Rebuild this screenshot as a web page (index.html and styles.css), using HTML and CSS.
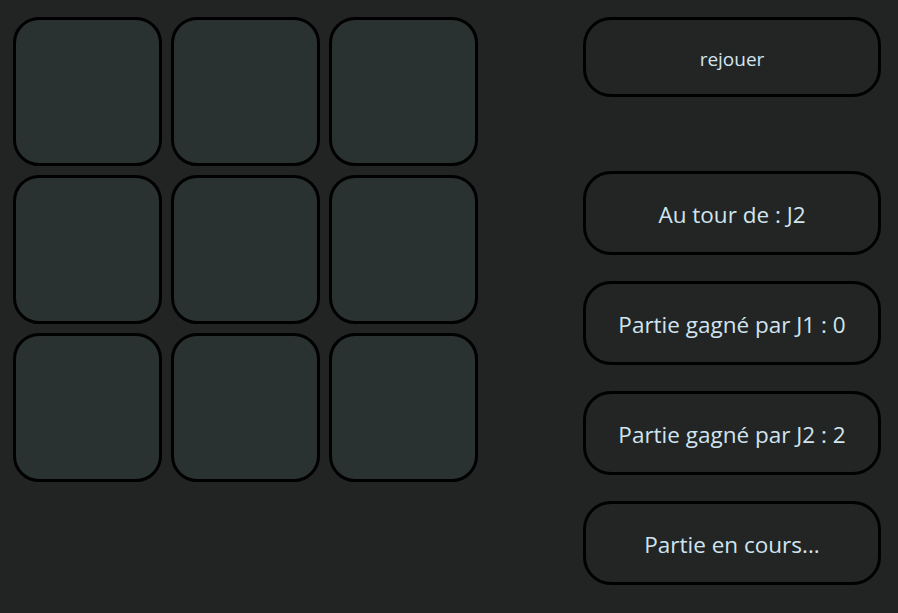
FILE: index.html
```html
<!DOCTYPE html>
<html lang="fr">
<head>
<meta charset="utf-8">
<title>Morpion</title>
<link rel="stylesheet" href="styles.css">
</head>
<body>
<main class="app">
  <section class="board">
    <div class="cell"></div>
    <div class="cell"></div>
    <div class="cell"></div>
    <div class="cell"></div>
    <div class="cell"></div>
    <div class="cell"></div>
    <div class="cell"></div>
    <div class="cell"></div>
    <div class="cell"></div>
  </section>
  <aside class="panel">
    <button class="btn btn-replay">rejouer</button>
    <div class="info info-turn">Au tour de : J2</div>
    <div class="info">Partie gagné par J1 : 0</div>
    <div class="info">Partie gagné par J2 : 2</div>
    <div class="info">Partie en cours...</div>
  </aside>
</main>
</body>
</html>
```

FILE: styles.css
```css
html, body {
  margin: 0;
  padding: 0;
  background: #222323;
  height: 100%;
}

body {
  font-family: "Open Sans", "Noto Sans", sans-serif;
  color: #d0e4f0;
}

.app {
  display: flex;
  justify-content: space-between;
  align-items: flex-start;
  padding: 17px 17px 0 13px;
}

.board {
  display: grid;
  grid-template-columns: repeat(3, 149px);
  grid-auto-rows: 149px;
  gap: 9px;
}

.cell {
  box-sizing: border-box;
  background: #2a3131;
  border: 3px solid #000;
  border-radius: 26px;
}

.panel {
  width: 298px;
  display: flex;
  flex-direction: column;
  gap: 26px;
}

.btn, .info {
  box-sizing: border-box;
  width: 100%;
  display: flex;
  align-items: center;
  justify-content: center;
  background: #232424;
  border: 3px solid #000;
  border-radius: 28px;
  color: #d0e4f0;
  font-family: inherit;
}

.btn {
  height: 80px;
  font-size: 19px;
  padding: 3px 0 0;
  cursor: pointer;
  margin-bottom: 48px;
}

.info {
  height: 84px;
  font-size: 22.5px;
  padding-top: 2px;
}
```
